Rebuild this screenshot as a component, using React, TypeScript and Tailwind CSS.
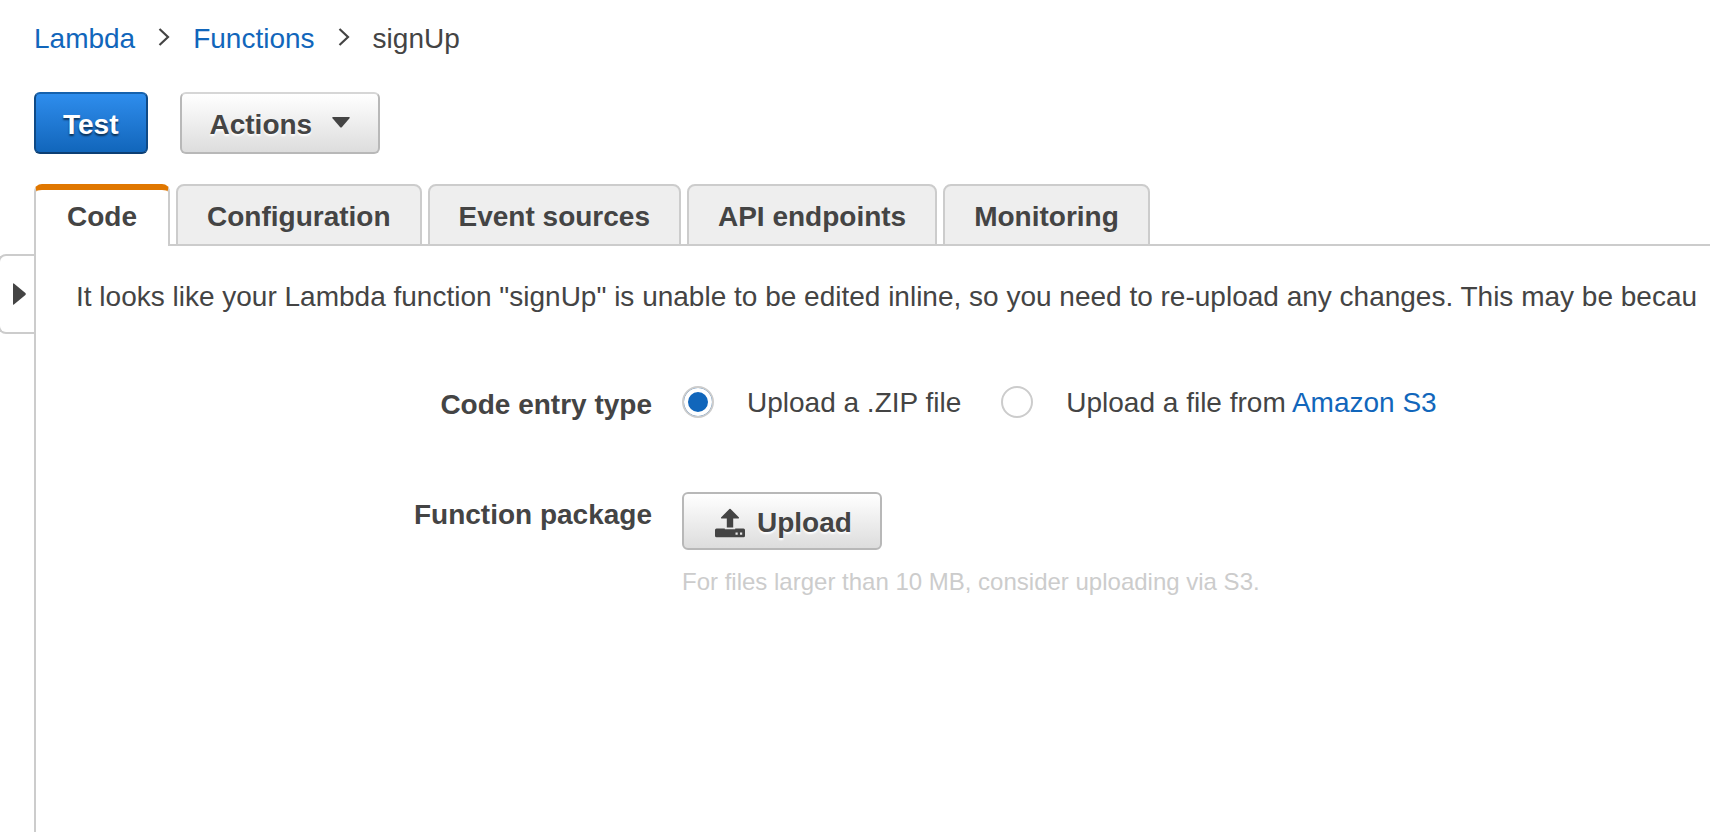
import { useState } from "react";

const tabs = ["Code", "Configuration", "Event sources", "API endpoints", "Monitoring"];

const greyButton =
  "flex items-center rounded-md border-2 border-[#b8b8b8] bg-linear-to-b from-white to-[#dddddd] pt-1 font-bold [text-shadow:0_2px_2px_#ffffff]";

const radio =
  "size-8 shrink-0 appearance-none rounded-full border-2 border-[#cccccc] bg-white checked:bg-[#1166bb] checked:shadow-[inset_0_0_0_4px_#ffffff]";

function Chevron() {
  return (
    <svg width="12" height="20" viewBox="0 0 12 20" fill="none" className="mb-1" aria-hidden="true">
      <path d="M1.5 2 L10 10 L1.5 18" stroke="#444444" strokeWidth="2.2" />
    </svg>
  );
}

function UploadIcon() {
  return (
    <svg width="30" height="30" viewBox="0 0 30 30" fill="#444444" aria-hidden="true">
      <path d="M14.4 1.1 Q15 0.5 15.6 1.1 L24 9.6 Q24.3 10.6 23.4 10.6 H18.2 V19.6 H11.8 V10.6 H6.6 Q5.7 10.6 6 9.6 Z" />
      <path
        fillRule="evenodd"
        d="M1.5 20.5 H9.8 V21.3 H20.2 V20.5 H28.5 Q30 20.5 30 22 V27.8 Q30 29.3 28.5 29.3 H1.5 Q0 29.3 0 27.8 V22 Q0 20.5 1.5 20.5 Z M20.5 24.5 V26.7 H22.7 V24.5 Z M25 24.5 V26.7 H27.2 V24.5 Z"
      />
    </svg>
  );
}

export default function App() {
  const [active, setActive] = useState("Code");
  const [source, setSource] = useState("zip");

  return (
    <div className="flex min-h-screen flex-col overflow-hidden bg-white font-['Liberation_Sans',Arial,sans-serif] text-[28px] leading-8 text-[#444444]">
      <nav aria-label="Breadcrumb" className="flex items-center gap-[23px] pt-[23px] pl-[34px]">
        <a href="#lambda" className="text-[#1166bb]">Lambda</a>
        <Chevron />
        <a href="#functions" className="text-[#1166bb]">Functions</a>
        <Chevron />
        <span>signUp</span>
      </nav>

      <div className="flex gap-8 pt-[37px] pl-[34px]">
        <button
          type="button"
          className="h-[62px] rounded-md border-2 border-t-[#1561ad] border-x-[#0f4a86] border-b-[#0c3f74] bg-linear-to-b from-[#2e8ded] to-[#1166bb] px-[27px] pt-1 font-bold text-white [text-shadow:0_2px_2px_rgba(0,0,0,0.6)]"
        >
          Test
        </button>
        <button type="button" className={`${greyButton} h-[62px] gap-5 border-t-[#d6d6d6] px-7`}>
          Actions
          <svg width="18" height="11" viewBox="0 0 18 11" fill="#444444" className="mb-1.5" aria-hidden="true">
            <path d="M1 0 H17 Q18.5 0 17.5 1.2 L10 10 Q9 11 8 10 L0.5 1.2 Q-0.5 0 1 0 Z" />
          </svg>
        </button>
      </div>

      <div className="flex pt-[30px] pl-[34px]">
        <div role="tablist" className="flex">
          {tabs.map((name) => (
            <div key={name} className="flex">
              <button
                type="button"
                role="tab"
                aria-selected={active === name}
                onClick={() => setActive(name)}
                className={
                  active === name
                    ? "h-[62px] rounded-t-lg border-x-2 border-t-[6px] border-x-[#cccccc] border-t-[#e07700] bg-white px-[31px] pb-0.5 font-bold"
                    : "h-[62px] rounded-t-lg border-2 border-[#cccccc] bg-[#eeeeee] px-[29px] pt-1 font-bold"
                }
              >
                {name}
              </button>
              <div className="w-1.5 border-b-2 border-[#cccccc]" />
            </div>
          ))}
        </div>
        <div className="grow border-b-2 border-[#cccccc]" />
      </div>

      <div className="flex grow">
        <div className="w-[34px] shrink-0 pt-2">
          <button
            type="button"
            aria-label="Expand side panel"
            className="-ml-0.5 flex h-20 w-9 items-center rounded-l-lg border-y-2 border-l-2 border-[#cccccc] pl-[13px]"
          >
            <svg width="13" height="22" viewBox="0 0 13 22" fill="#444444" aria-hidden="true">
              <path d="M0 1 Q0 -0.5 1.2 0.8 L12.4 10 Q13.2 11 12.4 12 L1.2 21.2 Q0 22.5 0 21 Z" />
            </svg>
          </button>
        </div>

        <main className="min-w-0 grow border-l-2 border-[#cccccc] pt-[35px] pl-10">
          <p className="whitespace-nowrap">
            It looks like your Lambda function "signUp" is unable to be edited inline, so you need to re-upload any
            changes. This may be becau
          </p>

          <div className="grid grid-cols-[576px_1fr] gap-x-[30px] pt-[73px]">
            <span id="entry-type" className="pt-[3px] text-right font-bold">Code entry type</span>
            <div role="radiogroup" aria-labelledby="entry-type" className="flex gap-10 whitespace-nowrap">
              <label className="flex gap-[33px]">
                <input type="radio" name="source" className={radio} checked={source === "zip"} onChange={() => setSource("zip")} />
                <span className="pt-px">Upload a .ZIP file</span>
              </label>
              <label className="flex gap-[33px]">
                <input type="radio" name="source" className={radio} checked={source === "s3"} onChange={() => setSource("s3")} />
                <span className="pt-px">
                  Upload a file from <a href="#s3" className="text-[#1166bb]">Amazon S3</a>
                </span>
              </label>
            </div>
          </div>

          <div className="grid grid-cols-[576px_1fr] gap-x-[30px] pt-[71px]">
            <label htmlFor="package" className="pt-[7px] text-right font-bold">Function package</label>
            <div>
              <button id="package" type="button" className={`${greyButton} h-[58px] gap-3 pr-7 pl-[31px]`}>
                <UploadIcon />
                Upload
              </button>
              <p className="pt-4 text-[24px] text-[#cccccc]">For files larger than 10 MB, consider uploading via S3.</p>
            </div>
          </div>
        </main>
      </div>
    </div>
  );
}
